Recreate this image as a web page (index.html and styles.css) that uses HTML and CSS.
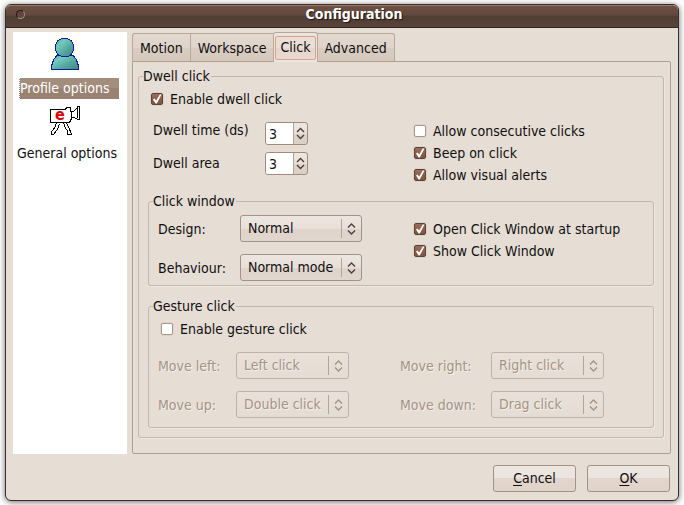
FILE: index.html
```html
<!DOCTYPE html>
<html lang="en">
<head>
<meta charset="utf-8">
<title>Configuration</title>
<link rel="stylesheet" href="styles.css">
</head>
<body>
<svg class="defs" aria-hidden="true">
  <symbol id="updown" viewBox="0 0 9 12"><path d="M1 4.500 4.500 1 8 4.500M1 7.500 4.500 11 8 7.500" fill="none" stroke="currentColor" stroke-width="1.400"/></symbol>
</svg>
<main class="window">
  <header class="titlebar">
    <button class="close" aria-label="Close"></button>
    <h1>Configuration</h1>
  </header>
  <form class="body">
    <div class="columns">
      <nav class="sidebar">
        <a class="item" href="#profile">
          <svg width="28" height="32" viewBox="0 0 28 32" shape-rendering="crispEdges" aria-hidden="true">
            <defs><linearGradient id="teal" x1="0" y1="0" x2="1" y2="1"><stop offset="0" stop-color="#54a69c"/><stop offset=".3" stop-color="#73c9bd"/><stop offset=".65" stop-color="#52a399"/><stop offset="1" stop-color="#43877f"/></linearGradient></defs>
            <path d="M.5 31.500V28L1.500 25 2.500 22 4.500 19 6.500 17H21.500L23.500 19 25.500 22 26.500 25 27.500 28V31.500Z" fill="url(#teal)" stroke="#0a1f9c"/>
            <path d="M10.500 .5H16.500L20.500 3 22.500 7V12L20.500 16 17 18.500H11L6.500 16 4.500 12V7L6.500 3Z" fill="url(#teal)" stroke="#0a1f9c"/>
          </svg>
          <span class="item-label selected">Profile options</span>
        </a>
        <a class="item" href="#general">
          <svg width="32" height="29" viewBox="0 0 32 29" aria-hidden="true">
            <g fill="#fff" stroke="#000" shape-rendering="crispEdges">
              <path d="M1.500 3.500H16L18 1.500H21.500V5.500H22.500V12.500L20.500 16.500H1.500Z"/>
              <path d="M22.500 5.500H24.500L28.500 1.500V.5H30.500V13.500H28.500L25.500 11.500H22.500M28.500 2V12"/>
              <path d="M7.500 17 5.500 22 2.500 26V28.500H4.500L8.500 23 10.500 18M14.500 17 16.500 22 18.500 25V28.500H22.500L20.500 23 17.500 17" fill="none"/>
            </g>
            <text class="badge-e" x="6" y="14">e</text>
          </svg>
          <span class="item-label">General options</span>
        </a>
      </nav>
      <section class="notebook">
        <div class="tabs" role="tablist">
          <button type="button" role="tab">Motion</button>
          <button type="button" role="tab">Workspace</button>
          <button type="button" role="tab" class="active" aria-selected="true"><span>Click</span></button>
          <button type="button" role="tab">Advanced</button>
        </div>
        <div class="panel" role="tabpanel">
          <fieldset class="group">
            <legend>Dwell click</legend>
            <label class="check lead"><input type="checkbox" checked>Enable dwell click</label>
            <div class="dwell">
              <div class="dwell-labels">
                <label for="time">Dwell time (ds)</label>
                <label for="area">Dwell area</label>
              </div>
              <div class="spinners">
                <span class="spin"><input id="time" type="number" value="3"><svg><use href="#updown"/></svg></span>
                <span class="spin"><input id="area" type="number" value="3"><svg><use href="#updown"/></svg></span>
              </div>
              <div>
                <label class="check"><input type="checkbox">Allow consecutive clicks</label>
                <label class="check"><input type="checkbox" checked>Beep on click</label>
                <label class="check"><input type="checkbox" checked>Allow visual alerts</label>
              </div>
            </div>
            <fieldset class="group click-window">
              <legend>Click window</legend>
              <div class="click-grid">
                <div class="pairs">
                  <label for="design">Design:</label>
                  <span class="combo"><select id="design"><option>Normal</option></select><svg><use href="#updown"/></svg></span>
                  <label for="behaviour">Behaviour:</label>
                  <span class="combo"><select id="behaviour"><option>Normal mode</option></select><svg><use href="#updown"/></svg></span>
                </div>
                <div class="click-checks">
                  <label class="check"><input type="checkbox" checked>Open Click Window at startup</label>
                  <label class="check"><input type="checkbox" checked>Show Click Window</label>
                </div>
              </div>
            </fieldset>
            <fieldset class="group gesture">
              <legend>Gesture click</legend>
              <label class="check lead"><input type="checkbox">Enable gesture click</label>
              <div class="gesture-grid">
                <div class="pairs disabled">
                  <label for="left">Move left:</label>
                  <span class="combo"><select id="left" disabled><option>Left click</option></select><svg><use href="#updown"/></svg></span>
                  <label for="up">Move up:</label>
                  <span class="combo"><select id="up" disabled><option>Double click</option></select><svg><use href="#updown"/></svg></span>
                </div>
                <div class="pairs disabled wide">
                  <label for="right">Move right:</label>
                  <span class="combo"><select id="right" disabled><option>Right click</option></select><svg><use href="#updown"/></svg></span>
                  <label for="down">Move down:</label>
                  <span class="combo"><select id="down" disabled><option>Drag click</option></select><svg><use href="#updown"/></svg></span>
                </div>
              </div>
            </fieldset>
          </fieldset>
        </div>
      </section>
    </div>
    <footer class="actions">
      <button type="button"><u>C</u>ancel</button>
      <button type="button"><u>O</u>K</button>
    </footer>
  </form>
</main>
</body>
</html>
```
FILE: styles.css
```css
* { box-sizing: border-box; }

body {
  margin: 0;
  padding: 4px 5px;
  background: #fff;
  color: #101010;
  font: 14px/18px "DejaVu Sans Condensed", "DejaVu Sans", sans-serif;
}

button, input, select { font: inherit; color: inherit; margin: 0; }

.defs { display: none; }

.window {
  border: 1px solid #3a2f2b;
  border-radius: 6px;
  background: #e6ddd4;
  box-shadow: 0 1px 6px rgba(0, 0, 0, .6);
}

.titlebar {
  display: grid;
  grid-template-columns: 28px 1fr 4px;
  align-items: start;
  height: 23px;
  border-top: 1px solid #9b7565;
  border-bottom: 1px solid #2f2623;
  border-radius: 5px 5px 0 0;
  background: linear-gradient(#6f5145, #60483d 45%, #4f3d34 46%, #5a4339);
}

.titlebar h1 {
  margin: 0;
  color: #fff;
  font-size: 14px;
  line-height: 16px;
  text-align: center;
  text-shadow: 1px 1px 1px #1c1512;
}

.close {
  width: 9px;
  height: 9px;
  margin: 4px 0 0 10px;
  padding: 0;
  border: 1px solid #241b18;
  border-right-color: #a58d82;
  border-bottom-color: #a58d82;
  border-radius: 50%;
  background: #5f473d;
}

.body { padding: 4px 7px 8px; }
.columns { display: flex; gap: 5px; }

.sidebar {
  display: flex;
  flex-direction: column;
  flex: none;
  gap: 7px;
  width: 114px;
  padding: 6px 8px 6px 2px;
  background: #fff;
}

.item {
  display: flex;
  flex-direction: column;
  align-items: center;
  gap: 8px;
  color: inherit;
  text-decoration: none;
}

.item svg { margin-right: 4px; }
.item-label { line-height: 20px; white-space: nowrap; }

.selected {
  align-self: flex-end;
  width: 100px;
  height: 21px;
  border-left: 1px dotted #fff;
  background: linear-gradient(#a38d7d, #a38d7d 50%, #998271 50%);
  color: #fff;
}

.badge-e { fill: #d90000; font: bold 16px "DejaVu Sans Condensed", sans-serif; }

.notebook { flex: 1; min-width: 0; }
.tabs { display: flex; align-items: flex-end; height: 29px; }

.tabs button {
  height: 28px;
  padding: 0 7px;
  border: 1px solid #b9a89a;
  border-right-width: 0;
  border-bottom: 0;
  background: linear-gradient(#e3d9d0, #dfd4ca 50%, #d9cdc2 51%, #d5c8bc);
}

.tabs button:first-child { border-top-left-radius: 3px; }
.tabs button:last-child { border-right-width: 1px; border-top-right-radius: 3px; }

.tabs .active {
  height: 30px;
  margin-bottom: -1px;
  padding: 2px 1px;
  border-right-width: 1px;
  border-radius: 3px 3px 0 0;
  background: #ece5de;
}

.tabs .active + button { border-left-width: 0; }

.tabs .active span {
  display: block;
  height: 24px;
  padding: 1px 4px 0;
  border: 1px solid #d9a28a;
  border-radius: 2px;
  background: linear-gradient(#eaded6, #eaded6 50%, #e5d6cc 51%, #e8dad0);
}

.panel {
  padding: 5px 6px 15px 5px;
  border: 1px solid #b09f90;
  border-radius: 0 2px 2px;
}

.group {
  min-width: 0;
  margin: 0;
  padding: 0 9px 9px;
  border: 1px solid #c6b7aa;
  border-radius: 3px;
  box-shadow: 1px 1px 0 #eee8e2;
}

legend { margin-left: -5px; padding: 0 1px 0 0; }

.check { display: flex; align-items: center; height: 22px; white-space: nowrap; }
.lead { margin: 3px 0 0 3px; }

.check input {
  appearance: none;
  width: 12px;
  height: 12px;
  margin-right: 7px;
  border: 1px solid #a8978a;
  border-radius: 2px;
  background: #fff;
  box-shadow: 0 0 0 1px #ded3c8;
}

.check input:checked { border-color: #5e4238; background: linear-gradient(#9a6e5a, #80533f); }

.check input:checked::before {
  content: "";
  display: block;
  height: 10px;
  background: #fff;
  clip-path: polygon(10% 55%, 25% 45%, 42% 65%, 78% 5%, 95% 5%, 48% 95%, 36% 95%);
}

.dwell { display: grid; grid-template-columns: 117px 149px 1fr; margin-top: 10px; }
.dwell-labels { display: flex; flex-direction: column; gap: 15px; padding: 1px 0 0 5px; white-space: nowrap; }
.spinners { display: flex; flex-direction: column; gap: 7px; padding-top: 2px; }

.spin {
  display: flex;
  align-items: center;
  width: 43px;
  height: 23px;
  border: 1px solid #a08b7d;
  border-radius: 3px;
  background: linear-gradient(#eee7e1, #e8dfd7 50%, #dfd3c9 51%, #dccfc4);
}

.spin input {
  appearance: textfield;
  width: 28px;
  height: 21px;
  padding: 0 0 0 3px;
  border: 0;
  border-right: 1px solid #b3a396;
  border-radius: 2px 0 0 2px;
  background: #fff;
}

.spin input::-webkit-inner-spin-button { appearance: none; margin: 0; }
.spin svg { width: 9px; height: 15px; margin-left: 2px; color: #4a4039; }

.click-window { margin-top: 6px; padding-bottom: 4px; }
.click-grid { display: grid; grid-template-columns: 256px 1fr; padding-top: 5px; }
.click-checks { padding-top: 3px; }

.pairs {
  display: grid;
  grid-template-columns: 82px 122px;
  row-gap: 12px;
  align-items: center;
  align-content: start;
  white-space: nowrap;
}

.combo { display: block; position: relative; height: 27px; }

.combo select {
  appearance: none;
  display: block;
  width: 100%;
  height: 27px;
  padding: 0 0 2px 7px;
  border: 1px solid #a39286;
  border-radius: 3px;
  background: linear-gradient(#ede6e0, #e8dfd8 50%, #dfd3ca 51%, #e1d6cd);
  opacity: 1;
}

.combo svg {
  position: absolute;
  top: 4px;
  right: 1px;
  width: 20px;
  height: 19px;
  padding: 4px 5px 3px;
  border-left: 1px solid #b5a598;
  color: #4a4039;
  pointer-events: none;
}

.gesture { margin-top: 11px; }
.gesture-grid { display: grid; grid-template-columns: 242px 1fr; margin-top: 12px; }
.gesture .pairs { grid-template-columns: 78px 113px; }
.gesture .wide { grid-template-columns: 91px 113px; }
.disabled, .disabled svg { color: #a59485; }
.disabled label, .disabled select { text-shadow: 1px 1px 0 #f4efea; }
.disabled select { border-color: #c2b2a5; background: linear-gradient(#e9e0d9, #e5dcd3); }

.actions {
  display: flex;
  justify-content: flex-end;
  gap: 11px;
  margin-top: 11px;
  padding-right: 1px;
}

.actions button {
  width: 83px;
  height: 27px;
  padding: 0 0 1px;
  border: 1px solid #a39286;
  border-radius: 3px;
  background: linear-gradient(#ede6e0, #ece4de 48%, #e1d5cc 50%, #e0d4ca);
}

.actions u { text-underline-offset: 2px; }
```
